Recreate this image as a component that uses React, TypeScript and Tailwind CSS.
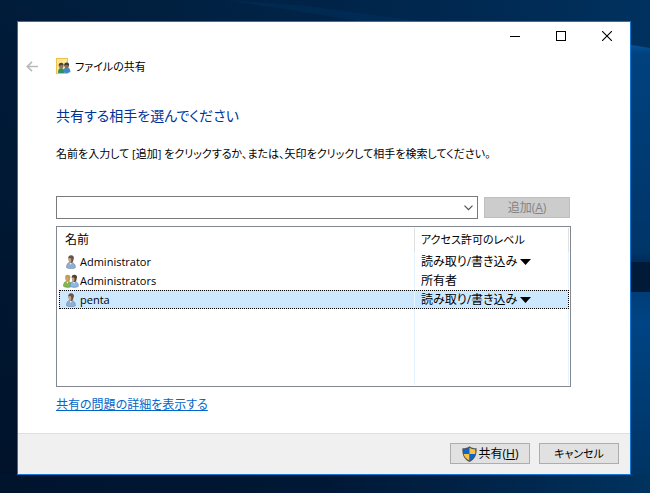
import React from "react";

type Entry = { name: string; kind: "user" | "group"; level: string; editable: boolean; selected?: boolean };

const entries: Entry[] = [
  { name: "Administrator", kind: "user", level: "読み取り/書き込み", editable: true },
  { name: "Administrators", kind: "group", level: "所有者", editable: false },
  { name: "penta", kind: "user", level: "読み取り/書き込み", editable: true, selected: true },
];

function Wallpaper() {
  return (
    <svg className="absolute inset-0 h-full w-full" viewBox="0 0 650 493" preserveAspectRatio="none" aria-hidden="true">
      <defs>
        <linearGradient id="base" x1="0" y1="0" x2="1" y2="0">
          <stop offset="0" stopColor="#001c3a" />
          <stop offset="0.5" stopColor="#002448" />
          <stop offset="0.8" stopColor="#002b55" />
          <stop offset="1" stopColor="#00325f" />
        </linearGradient>
        <linearGradient id="shade" x1="0" y1="0" x2="0" y2="1">
          <stop offset="0" stopColor="#000c20" stopOpacity="0" />
          <stop offset="1" stopColor="#000c20" stopOpacity="0.6" />
        </linearGradient>
        <linearGradient id="pane" x1="0" y1="0" x2="0" y2="1">
          <stop offset="0" stopColor="#0a5cab" />
          <stop offset="0.06" stopColor="#00427f" />
          <stop offset="0.95" stopColor="#003568" />
          <stop offset="1" stopColor="#002a55" />
        </linearGradient>
        <linearGradient id="lower" x1="0" y1="0" x2="0" y2="1">
          <stop offset="0" stopColor="#003d78" />
          <stop offset="0.15" stopColor="#004484" />
          <stop offset="1" stopColor="#003260" />
        </linearGradient>
        <linearGradient id="floor" x1="0" y1="0" x2="1" y2="0">
          <stop offset="0" stopColor="#00142e" />
          <stop offset="0.5" stopColor="#001836" />
          <stop offset="0.75" stopColor="#002449" />
          <stop offset="1" stopColor="#00335f" />
        </linearGradient>
      </defs>
      <rect width="650" height="493" fill="url(#base)" />
      <rect width="200" height="493" fill="url(#shade)" />
      <path d="M225 0 L300 5 L420 21 L360 21 Z" fill="#00376b" opacity="0.3" />
      <path d="M600 40 L650 48 V263 H600 Z" fill="url(#pane)" />
      <rect x="600" y="262" width="50" height="30" fill="#001a37" />
      <rect x="600" y="292" width="50" height="201" fill="url(#lower)" />
      <rect y="474" width="650" height="19" fill="url(#floor)" />
    </svg>
  );
}

function Person({ body, dark, hair, x = 0 }: { body: string; dark: string; hair: string; x?: number }) {
  return (
    <g transform={`translate(${x} 0)`}>
      <path d="M1.5 12.6 C1.5 9.4 2.6 8 4.4 7.4 H6.8 C9 8 10.4 9.4 10.4 12.6 C8.6 14.2 3.4 14.2 1.5 12.6Z" fill={body} stroke={dark} strokeWidth="0.6" />
      <path d="M4.5 7.4 L5.7 10 L7 7.4Z" fill="#eef3f8" />
      <path d="M3.6 4 C3.6 1.8 4.4 1 6 1 C8 1 8.6 2.2 8.5 4.5 C8.3 6.8 7.3 8 6 8 C4.8 8 3.7 6.5 3.6 4Z" fill={hair} />
      <path d="M3.5 3.6 C4.2 2.8 5.4 2.8 6 3.6 C6.4 5 6.4 6.8 5.6 7.8 C4.2 7.4 3.5 5.8 3.5 3.6Z" fill="#d3a176" />
      <path d="M3.3 4 C2.9 1.5 4.2 0.3 6 0.3 C8.3 0.3 9.2 1.8 8.8 4 L6 3 L3.9 2.8Z" fill={hair} />
    </g>
  );
}

function EntryIcon({ kind }: { kind: "user" | "group" }) {
  if (kind === "group") {
    return (
      <svg className="block h-[14px] w-4" viewBox="0 0 17 14" aria-hidden="true">
        <Person body="#86b54f" dark="#5a9338" hair="#c2a04c" x={-1} />
        <Person body="#8fb7e2" dark="#5482b5" hair="#4e4136" x={6} />
      </svg>
    );
  }
  return (
    <svg className="block h-[14px] w-3" viewBox="0 0 12 14" aria-hidden="true">
      <Person body="#8fadd0" dark="#6788ac" hair="#66554a" />
    </svg>
  );
}

function SharedFolderIcon() {
  return (
    <svg className="block h-4 w-[15px]" viewBox="0 0 15 16" aria-hidden="true">
      <rect x="0.5" y="0.5" width="11" height="15" fill="#ffe596" stroke="#eec04c" />
      <path d="M2 14.5 C2 11.5 3 10 5 10 C7.3 10 8.5 11.5 8.5 15 H2.5Z" fill="#368c62" />
      <path d="M7.5 14 C7.5 11 8.5 9.6 10.5 9.6 C13 9.6 14.4 11 14.4 14 C12.5 15.3 9 15.3 7.5 14Z" fill="#3f88c8" />
      <circle cx="5.2" cy="8" r="2.4" fill="#a06f50" />
      <path d="M2.7 8.3 C2.4 5.5 3.7 4.8 5.2 4.8 C7 4.8 7.8 6 7.5 7.6 L6 6.9 L3.8 7.3Z" fill="#4a4038" />
      <circle cx="10.7" cy="7.8" r="2.4" fill="#8f634a" />
      <path d="M8.2 8 C8 5.3 9.2 4.6 10.8 4.6 C12.7 4.6 13.5 6 13 7.8 L11.6 6.8 L9.3 7.1Z" fill="#3b3938" />
    </svg>
  );
}

function ShieldIcon() {
  return (
    <svg className="block h-4 w-[15px]" viewBox="0 0 15 16" aria-hidden="true">
      <path d="M7.5 0.2 C9.5 1.8 11.8 2.3 14.6 2.2 C15 9 12.8 13.4 7.5 15.9 C2.2 13.4 0 9 0.4 2.2 C3.2 2.3 5.5 1.8 7.5 0.2Z" fill="#4b535c" />
      <path d="M7.5 1.7 C5.8 2.9 4 3.4 1.7 3.4 V8 H7.5Z" fill="#0b64cf" />
      <path d="M7.5 1.7 C9.2 2.9 11 3.4 13.3 3.4 V8 H7.5Z" fill="#ffc23d" />
      <path d="M1.7 8 H7.5 V14.6 C4.3 13 2.2 11 1.7 8Z" fill="#ffc23d" />
      <path d="M13.3 8 H7.5 V14.6 C10.7 13 12.8 11 13.3 8Z" fill="#0b64cf" />
    </svg>
  );
}

const captionButton = "flex h-7 w-[46px] items-center justify-center hover:bg-gray-200";
const footerButton =
  "flex h-[21px] w-20 items-center justify-center border border-[#adadad] bg-[#e1e1e1] whitespace-nowrap";

export default function App() {
  return (
    <div className="relative min-h-screen bg-[#001c3a] pt-[21px] pr-[19px] pb-[18px] pl-[17px] font-['Open_Sans','Noto_Sans_CJK_JP',sans-serif] text-[12px] leading-5 text-black [font-feature-settings:'palt']">
      <Wallpaper />
      <div className="relative border border-[#0f7ad6] bg-white" role="dialog" aria-labelledby="dialog-title">
        <div className="flex justify-end">
          <button className={captionButton} aria-label="最小化">
            <svg className="h-2.5 w-2.5" viewBox="0 0 10 10" shapeRendering="crispEdges">
              <path d="M0 5.5 H10" stroke="#000" />
            </svg>
          </button>
          <button className={captionButton} aria-label="最大化">
            <svg className="h-2.5 w-2.5" viewBox="0 0 10 10" shapeRendering="crispEdges">
              <path d="M0.5 0.5 H9.5 V9.5 H0.5Z" stroke="#000" fill="none" />
            </svg>
          </button>
          <button className={captionButton} aria-label="閉じる">
            <svg className="h-2.5 w-2.5" viewBox="0 0 10 10">
              <path d="M0 0 L10 10 M10 0 L0 10" stroke="#000" strokeWidth="1.1" />
            </svg>
          </button>
        </div>

        <header className="flex h-[30px] items-center pt-0.5 pl-2">
          <button className="w-[30px]" aria-label="戻る">
            <svg className="h-[11px] w-3" viewBox="0 0 12 11" fill="none" stroke="#bababa" strokeWidth="1.7">
              <path d="M12 5.5 H1.5 M6 0.8 L1.3 5.5 L6 10.2" />
            </svg>
          </button>
          <SharedFolderIcon />
          <h1 id="dialog-title" className="pt-0.5 pl-1 text-[11px]">ファイルの共有</h1>
        </header>

        <main className="pt-6 pr-[59px] pb-[18px] pl-[38px]">
          <h2 className="text-[14px] leading-6 text-[#003399]">共有する相手を選んでください</h2>
          <label htmlFor="person" className="mt-4 block text-[11px] whitespace-nowrap">
            名前を入力して [追加] をクリックするか、または、矢印をクリックして相手を検索してください。
          </label>

          <div className="mt-8 flex items-center gap-1.5 pr-px">
            <div className="flex h-[23px] flex-1 border border-[#7a7a7a] bg-white">
              <input id="person" type="text" className="min-w-0 flex-1 px-1 outline-none" />
              <button className="flex w-[17px] items-center justify-center" aria-label="候補を表示">
                <svg className="h-[6px] w-[9px]" viewBox="0 0 9 6" fill="none" stroke="#505050" strokeWidth="1.2">
                  <path d="M0.5 0.7 L4.5 4.7 L8.5 0.7" />
                </svg>
              </button>
            </div>
            <button disabled className="h-[21px] w-[86px] border border-[#bfbfbf] bg-[#cccccc] leading-[19px] text-[#838383]">
              追加(<span className="underline">A</span>)
            </button>
          </div>

          <div className="mt-[7px] h-[161px] border border-[#828790] bg-white py-px pr-px pl-0.5">
            <table className="h-full w-full table-fixed border-separate border-spacing-0">
              <colgroup>
                <col />
                <col className="w-[154px]" />
              </colgroup>
              <thead>
                <tr className="h-6 text-left">
                  <th className="border-r border-[#e0e0e0] p-0 pl-1.5 font-normal">名前</th>
                  <th className="border-r border-[#e0e0e0] p-0 pl-1.5 text-[11px] font-normal">アクセス許可のレベル</th>
                </tr>
              </thead>
              <tbody>
                {entries.map((e) => (
                  <tr
                    key={e.name}
                    aria-selected={!!e.selected}
                    className={
                      e.selected
                        ? "h-[19px] bg-[#cce8ff] outline-1 -outline-offset-1 outline-dotted outline-black"
                        : "h-[19px]"
                    }
                  >
                    <td className="border-r border-[#e5f3ff] p-0">
                      <div className="flex h-[19px] items-center pl-[3px]">
                        <span className="flex w-[18px] justify-center">
                          <EntryIcon kind={e.kind} />
                        </span>
                        <span className="text-[11px] leading-[19px]">{e.name}</span>
                      </div>
                    </td>
                    <td className="border-r border-[#e5f3ff] p-0 pl-1.5">
                      {e.editable ? (
                        <div className="flex h-[19px] items-center gap-0.5">
                          <select
                            aria-label={`${e.name} のアクセス許可のレベル`}
                            defaultValue={e.level}
                            className="h-[19px] appearance-none bg-transparent p-0 leading-[19px] outline-none"
                          >
                            <option>読み取り/書き込み</option>
                          </select>
                          <svg className="h-[6px] w-[11px]" viewBox="0 0 11 6" aria-hidden="true">
                            <path d="M0 0 H11 L5.5 6Z" fill="#000" />
                          </svg>
                        </div>
                      ) : (
                        <div className="h-[19px] leading-[19px]">{e.level}</div>
                      )}
                    </td>
                  </tr>
                ))}
                <tr>
                  <td className="border-r border-[#e5f3ff] p-0" />
                  <td className="border-r border-[#e5f3ff] p-0" />
                </tr>
              </tbody>
            </table>
          </div>

          <a href="#details" className="mt-2 block w-fit text-[#0066cc] underline">
            共有の問題の詳細を表示する
          </a>
        </main>

        <footer className="flex justify-end gap-[9px] border-t border-[#dfdfdf] bg-[#f0f0f0] pt-[9px] pr-[11px] pb-2.5">
          <button className={footerButton}>
            <ShieldIcon />
            <span className="pt-px pl-0.5">
              共有(<span className="underline">H</span>)
            </span>
          </button>
          <button className={footerButton}>
            <span className="pt-px text-[11px]">キャンセル</span>
          </button>
        </footer>
      </div>
    </div>
  );
}
